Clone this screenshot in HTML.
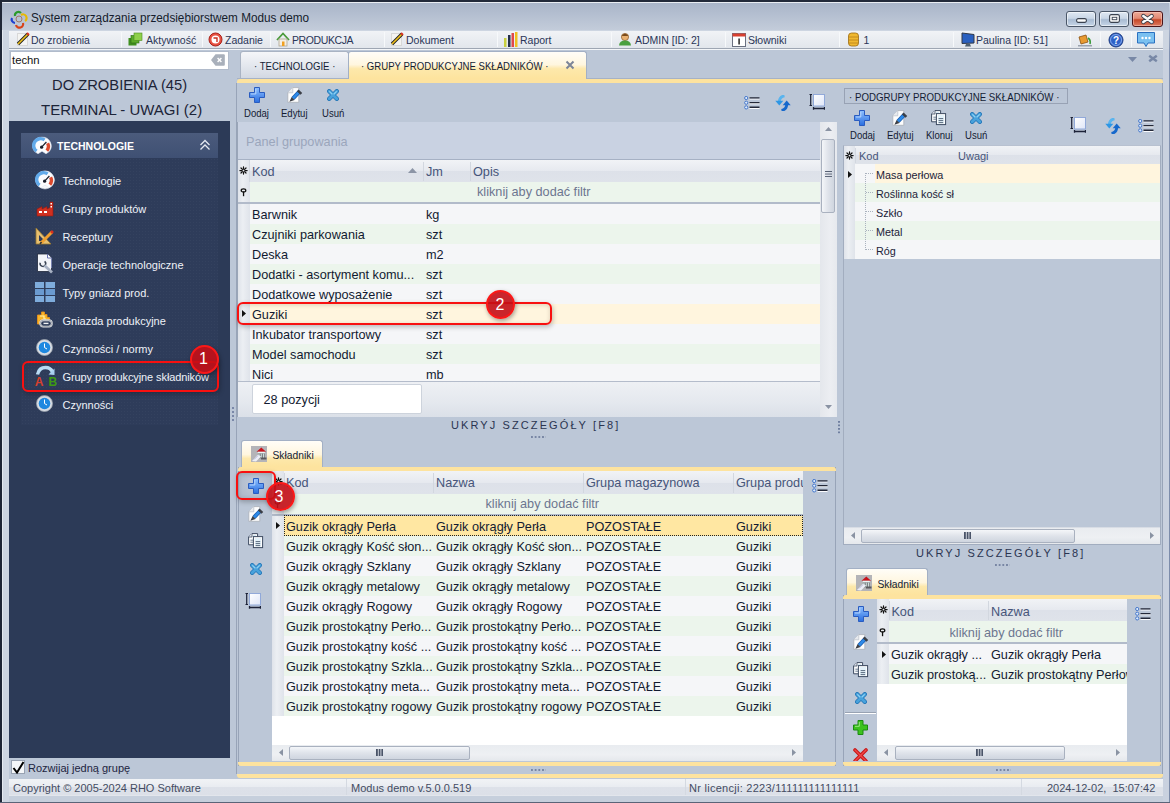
<!DOCTYPE html>
<html><head><meta charset="utf-8">
<style>
*{margin:0;padding:0;box-sizing:border-box}
html,body{width:1170px;height:803px;overflow:hidden}
body{position:relative;background:#bcc7d7;font-family:"Liberation Sans",sans-serif;color:#1c2640;font-size:12px}
.a{position:absolute}
.t{position:absolute;white-space:nowrap;line-height:1}
svg{position:absolute;overflow:visible}
.tb{font-size:10.5px;color:#2a3557}
.sep{position:absolute;top:32px;width:1px;height:15px;background:#d3d9e2;border-right:1px solid #f7f9fb}
.li{font-size:11px;color:#eef2f8}
.hdr{position:absolute;background:linear-gradient(#f1f3f6,#e6e9ef 50%,#dde1e9 51%,#dfe3ea)}
.g13{font-size:12.7px;color:#121a30;margin-top:0.7px}
.gh{font-size:12.7px;color:#46557a;margin-top:0.8px}
.ind{position:absolute;background:linear-gradient(90deg,#dfe3ea,#eceff3 40%,#dfe3ea)}
.rw{background:#f5f6f8}
.rg{background:#ecf5ec}
.sm{font-size:10.6px;color:#131b33;transform-origin:0 0;transform:scaleX(0.9)}
.sx{transform-origin:0 0}
</style></head><body>
<!-- WINDOW FRAME -->
<div class="a" style="left:0;top:0;width:1170px;height:803px;background:#cdd5e1"></div>
<div class="a" style="left:0;top:0;width:1170px;height:2px;background:#222a3a"></div>
<div class="a" style="left:0;top:0;width:2px;height:803px;background:#1f2636"></div>
<div class="a" style="left:2px;top:2px;width:1168px;height:1px;background:#e9edf3"></div>
<div class="a" style="left:2px;top:3px;width:1px;height:800px;background:#e4e9f0"></div>
<div class="a" style="left:2px;top:3px;width:1168px;height:27px;background:linear-gradient(#a9b5c9,#c3ccda)"></div>
<div class="a" style="left:0;top:802px;width:1170px;height:1px;background:#5a6478"></div>
<div class="a" style="left:9px;top:49px;width:1154px;height:747px;background:#bcc7d7"></div>

<!-- TITLE -->
<svg style="left:10px;top:10px" width="18" height="18" viewBox="0 0 18 18">
 <path d="M5 6 A3.5 3.5 0 0 1 11 3" stroke="#2a9a2a" stroke-width="2.2" fill="none"/>
 <path d="M11 5 A3.5 3.5 0 0 1 15 11" stroke="#e8b800" stroke-width="2.2" fill="none"/>
 <path d="M13 13 A3.5 3.5 0 0 1 6 15" stroke="#d8421a" stroke-width="2.2" fill="none"/>
 <path d="M5 13 A3.5 3.5 0 0 1 2 8" stroke="#1f3fd0" stroke-width="2.2" fill="none"/>
 <circle cx="9" cy="9" r="3" stroke="#a07868" stroke-width="1" fill="none"/>
</svg>
<div class="t sx" style="left:31px;top:12px;font-size:12.3px;color:#151c2c;transform:scaleX(0.955)">System zarządzania przedsiębiorstwem Modus demo</div>
<!-- window buttons -->
<div class="a" style="left:1066px;top:11px;width:30px;height:16px;border:1px solid #4a5668;border-radius:3px;background:linear-gradient(#dfe8f3,#c9d6e6 45%,#a9bbd2 55%,#c6d5e7);box-shadow:inset 0 0 0 1px rgba(255,255,255,.55)"></div>
<svg style="left:1076px;top:18px" width="11" height="5" viewBox="0 0 11 5"><rect x="0.6" y="0.6" width="9.8" height="3.8" rx="1.6" fill="#fafafa" stroke="#3a4250" stroke-width="1.1"/></svg>
<div class="a" style="left:1099px;top:11px;width:30px;height:16px;border:1px solid #4a5668;border-radius:3px;background:linear-gradient(#dfe8f3,#c9d6e6 45%,#a9bbd2 55%,#c6d5e7);box-shadow:inset 0 0 0 1px rgba(255,255,255,.55)"></div>
<svg style="left:1109px;top:14px" width="11" height="9" viewBox="0 0 11 9"><rect x="0.6" y="0.6" width="9.8" height="7.8" rx="1.6" fill="#fafafa" stroke="#3a4250" stroke-width="1.1"/><rect x="3.2" y="3.3" width="4.6" height="2.4" fill="#fff" stroke="#3a4250" stroke-width="0.9"/></svg>
<div class="a" style="left:1132px;top:11px;width:31px;height:16px;border:1px solid #4a1418;border-radius:3px;background:linear-gradient(#eeaa98,#e38a74 45%,#c64828 56%,#dd7a60);box-shadow:inset 0 0 0 1px rgba(255,220,210,.45)"></div>
<svg style="left:1141px;top:13.5px" width="13" height="10" viewBox="0 0 13 10"><path d="M2.3 2 L10.7 8 M10.7 2 L2.3 8" stroke="#3c3f48" stroke-width="4.2" stroke-linecap="round"/><path d="M2.3 2 L10.7 8 M10.7 2 L2.3 8" stroke="#fbfbfb" stroke-width="2.5" stroke-linecap="round"/></svg>

<!-- TOOLBAR -->
<div class="a" style="left:9px;top:31px;width:1154px;height:17px;background:linear-gradient(#f1f3f6,#e2e6ec);"></div>
<div class="a" style="left:9px;top:48px;width:1154px;height:1px;background:#9ea6b3"></div>
<div class="a" style="left:9px;top:49px;width:1154px;height:1px;background:#f4f6f9"></div>
<div class="sep" style="left:121px"></div><div class="sep" style="left:202px"></div><div class="sep" style="left:270px"></div>
<div class="sep" style="left:384px"></div><div class="sep" style="left:497px"></div><div class="sep" style="left:611px"></div>
<div class="sep" style="left:725px"></div><div class="sep" style="left:839px"></div><div class="sep" style="left:953px"></div>
<div class="sep" style="left:1070px"></div><div class="sep" style="left:1100px"></div><div class="sep" style="left:1131px"></div>
<!-- pencil icon -->
<div class="a" style="left:17px;top:33px;width:11px;height:13px;background:#f4f4f2;border:1px solid #d8d8d8"></div>
<svg style="left:16px;top:32px" width="14" height="14" viewBox="0 0 14 14"><path d="M2 12 L12 2" stroke="#222" stroke-width="3.4"/><path d="M2 12 L12 2" stroke="#f2c21a" stroke-width="1.6"/><path d="M11 1 L13 3" stroke="#d83020" stroke-width="2"/></svg>
<div class="t tb" style="left:31px;top:35px">Do zrobienia</div>
<svg style="left:128px;top:33px" width="14" height="13" viewBox="0 0 14 13"><rect x="0.5" y="5" width="8" height="7.5" fill="#3f8f1f"/><rect x="3" y="2.5" width="8" height="7.5" fill="#5bab2a" stroke="#2d6a14" stroke-width="0.6"/><rect x="6" y="0" width="8" height="7.5" fill="#8fd04a" stroke="#4a8a20" stroke-width="0.6"/></svg>
<div class="t tb" style="left:146px;top:35px">Aktywność</div>
<svg style="left:208px;top:32px" width="15" height="15" viewBox="0 0 15 15"><circle cx="7.5" cy="7.5" r="6.5" fill="#e85040" stroke="#a82018" stroke-width="1"/><circle cx="7.5" cy="7.5" r="4" fill="#fff"/><path d="M5.5 6 H9 V10" stroke="#c83020" stroke-width="1.4" fill="none"/></svg>
<div class="t tb" style="left:225px;top:35px">Zadanie</div>
<svg style="left:276px;top:32px" width="14" height="15" viewBox="0 0 14 15"><path d="M1 8 L7 1.5 L13 8" stroke="#4a9a3a" stroke-width="1.8" fill="none"/><rect x="3" y="7" width="8" height="7" fill="#f4efe4" stroke="#b0a690" stroke-width="0.8"/><rect x="6" y="9.5" width="2.5" height="4.5" fill="#f0a020"/></svg>
<div class="t tb" style="left:292px;top:35px;letter-spacing:-0.4px">PRODUKCJA</div>
<div class="a" style="left:391px;top:33px;width:11px;height:13px;background:#f4f4f2;border:1px solid #d8d8d8"></div>
<svg style="left:390px;top:32px" width="14" height="14" viewBox="0 0 14 14"><path d="M2 12 L12 2" stroke="#222" stroke-width="3.4"/><path d="M2 12 L12 2" stroke="#f2c21a" stroke-width="1.6"/><path d="M11 1 L13 3" stroke="#d83020" stroke-width="2"/></svg>
<div class="t tb" style="left:406px;top:35px">Dokument</div>
<svg style="left:503px;top:32px" width="15" height="15" viewBox="0 0 15 15"><rect x="1" y="6" width="2.5" height="9" fill="#c8d040"/><rect x="5" y="3" width="2.5" height="12" fill="#24304a"/><rect x="8.5" y="1" width="2.5" height="14" fill="#e04848"/><rect x="12" y="0" width="2.5" height="15" fill="#f0c020"/></svg>
<div class="t tb" style="left:520px;top:35px">Raport</div>
<svg style="left:618px;top:32px" width="14" height="15" viewBox="0 0 14 15"><circle cx="7" cy="5" r="3.6" fill="#e8b070" stroke="#8a5a2a" stroke-width="0.7"/><path d="M3.5 4 Q7 -0.5 10.5 4" fill="#7a4a1a"/><path d="M1 13.5 Q1.5 8.5 7 8.5 Q12.5 8.5 13 13.5 Z" fill="#4aa040"/></svg>
<div class="t tb" style="left:635px;top:35px">ADMIN [ID: 2]</div>
<svg style="left:732px;top:32px" width="14" height="15" viewBox="0 0 14 15"><rect x="0.5" y="1.5" width="13" height="13" fill="#fff" stroke="#6a7080" stroke-width="1"/><rect x="0.5" y="1.5" width="13" height="3" fill="#d84030"/><rect x="6.3" y="6.5" width="1.6" height="6" fill="#333"/></svg>
<div class="t tb" style="left:748px;top:35px">Słowniki</div>
<svg style="left:848px;top:32px" width="11" height="15" viewBox="0 0 11 15"><rect x="0.5" y="1" width="10" height="13" rx="3" fill="#f0b830" stroke="#9a6a10" stroke-width="0.8"/><path d="M1 5 H10 M1 8 H10 M1 11 H10" stroke="#b8801a" stroke-width="0.8"/></svg>
<div class="t tb" style="left:863.5px;top:35px">1</div>
<svg style="left:961px;top:32px" width="14" height="15" viewBox="0 0 14 15"><path d="M1 1 L13 2.5 L13 11 L1 11.5 Z" fill="#2a60c0" stroke="#303848" stroke-width="1"/><path d="M5 12 L9 12 L10 14.5 L4 14.5 Z" fill="#506070"/></svg>
<div class="t tb" style="left:976px;top:35px">Paulina [ID: 51]</div>
<svg style="left:1077px;top:32px" width="16" height="15" viewBox="0 0 16 15"><path d="M2 5 L9 3 L11 10 L4 12 Z" fill="#e89a30" stroke="#8a5010" stroke-width="0.8"/><path d="M11 6 Q14 8 13 12" stroke="#3a9a3a" stroke-width="1.6" fill="none"/><rect x="1" y="13" width="14" height="1.5" fill="#9aa2ae"/></svg>
<svg style="left:1108px;top:32px" width="16" height="16" viewBox="0 0 16 16"><circle cx="8" cy="8" r="7" fill="#2e62c8" stroke="#1c3a80" stroke-width="1"/><circle cx="8" cy="8" r="5.5" fill="none" stroke="#9ab8f0" stroke-width="0.8"/><text x="8" y="12" font-size="10" font-weight="bold" fill="#fff" text-anchor="middle" font-family="Liberation Sans">?</text></svg>
<svg style="left:1137px;top:32px" width="18" height="16" viewBox="0 0 18 16"><path d="M0.5 0.5 H17.5 V11 H11 L9 14.5 L7 11 H0.5 Z" fill="#7ac0f0" stroke="#2a70c0" stroke-width="1"/><circle cx="5.5" cy="6" r="1.2" fill="#fff"/><circle cx="9" cy="6" r="1.2" fill="#fff"/><circle cx="12.5" cy="6" r="1.2" fill="#fff"/></svg>

<!-- LEFT PANEL -->
<div class="a" style="left:10px;top:51px;width:219px;height:19px;background:#fff;border:1px solid #b1bbcb"></div>
<div class="t" style="left:12px;top:55.3px;font-size:11.3px;color:#111">techn</div>
<svg style="left:211px;top:54px" width="14" height="12" viewBox="0 0 14 12"><path d="M0 6 L4.5 0.3 H12.8 Q13.8 0.3 13.8 1.3 V10.7 Q13.8 11.7 12.8 11.7 H4.5 Z" fill="#a9b0bb"/><path d="M6.6 4 L10.4 8 M10.4 4 L6.6 8" stroke="#fff" stroke-width="1.4"/></svg>
<div class="t sx" style="left:52px;top:77px;font-size:15.4px;color:#1c2438;transform:scaleX(0.958)">DO ZROBIENIA (45)</div>
<div class="t sx" style="left:41px;top:101.5px;font-size:15.4px;color:#1c2438;transform:scaleX(0.973)">TERMINAL - UWAGI (2)</div>
<div class="a" style="left:9px;top:121px;width:221px;height:637px;background:#2c3a57"></div>
<div class="a" style="left:21px;top:158px;width:197px;height:267px;background-color:#2e3c5a;background-image:radial-gradient(#34425f 0.6px,transparent 0.8px);background-size:3px 3px"></div>
<div class="a" style="left:21px;top:133px;width:197px;height:25px;background:linear-gradient(#4b5b7c,#3f5073)"></div>
<svg style="left:32px;top:136px" width="20" height="20"><use href="#igauge"/></svg>
<div class="t" style="left:57px;top:141px;font-size:10.5px;font-weight:bold;color:#fff">TECHNOLOGIE</div>
<svg style="left:199px;top:139px" width="12" height="12" viewBox="0 0 12 12"><path d="M1.5 6 L6 1.5 L10.5 6 M1.5 10.5 L6 6 L10.5 10.5" stroke="#e4e8f0" stroke-width="1.3" fill="none"/></svg>
<!-- left items -->
<svg style="left:35px;top:170px" width="20" height="20" viewBox="0 0 20 20"><circle cx="10" cy="10" r="9" fill="#f6f8fb" stroke="#c8d0dc" stroke-width="0.6"/><use href="#igauge" width="20" height="20"/></svg>
<div class="t li" style="left:62.5px;top:176.2px">Technologie</div>
<svg style="left:36px;top:201px" width="18" height="16" viewBox="0 0 18 16"><path d="M1 8 L6 5.5 V8 L11 5.5 V8 L14 6.5 V1 H17 V15 H1 Z" fill="#d03020" stroke="#901a10" stroke-width="0.6"/><rect x="3" y="10" width="3" height="2" fill="#fff"/><rect x="8" y="10" width="3" height="2" fill="#fff"/><rect x="14.5" y="2" width="1.5" height="1.5" fill="#fff"/><rect x="14.5" y="5" width="1.5" height="1.5" fill="#fff"/></svg>
<div class="t li" style="left:62.5px;top:204.2px">Grupy produktów</div>
<svg style="left:35px;top:227px" width="19" height="19" viewBox="0 0 19 19"><path d="M1 1 L1 17 L16 17 Z" fill="#e8c070" stroke="#9a7a30" stroke-width="0.8"/><path d="M4 8 L4 14 L10 14 Z" fill="#2e3c5a"/><path d="M6 16 L17 5" stroke="#f0a030" stroke-width="3"/><path d="M16 4 L18 6" stroke="#d83020" stroke-width="2.5"/><path d="M5 17 L6.5 15" stroke="#333" stroke-width="1.5"/></svg>
<div class="t li" style="left:62.5px;top:232.2px">Receptury</div>
<svg style="left:36px;top:253px" width="18" height="20" viewBox="0 0 18 20"><path d="M1.5 1 H11.5 L15.5 5 V18.5 H1.5 Z" fill="#f2f4f9" stroke="#1e2638" stroke-width="0.8"/><path d="M11.5 1 V5 H15.5" fill="#fff" stroke="#5a64a8" stroke-width="0.9"/><path d="M15.5 5 V15" stroke="#8a94c8" stroke-width="0.8"/><path d="M4.2 9.8 A2.8 2.8 0 1 0 8.6 8.4" stroke="#3a4454" stroke-width="1.5" fill="none"/><path d="M8.5 12.5 L16 19.5" stroke="#a8b2c4" stroke-width="2.8"/></svg>
<div class="t li" style="left:62.5px;top:260.2px">Operacje technologiczne</div>
<svg style="left:35px;top:282px" width="20" height="20" viewBox="0 0 20 20"><rect x="0" y="0" width="9" height="6" fill="#7eacdc"/><rect x="10.5" y="0" width="9.5" height="6" fill="#7eacdc"/><rect x="0" y="7" width="9" height="6" fill="#6a9ad0"/><rect x="10.5" y="7" width="9.5" height="6" fill="#6a9ad0"/><rect x="0" y="14" width="9" height="6" fill="#7eacdc"/><rect x="10.5" y="14" width="9.5" height="6" fill="#7eacdc"/></svg>
<div class="t li" style="left:62.5px;top:288.2px">Typy gniazd prod.</div>
<svg style="left:36px;top:311px" width="18" height="17" viewBox="0 0 18 17"><path d="M5.5 1 H8.5 V3.5 H11 V6.5 H13.5 V9 H4 V13 H1.5 V4 H5.5 Z" fill="#f8b628" stroke="#e8901c" stroke-width="0.9"/><path d="M4 5 H8 V8 H10" stroke="#fff2b0" stroke-width="1.2" fill="none"/><rect x="4.2" y="9.2" width="11.6" height="6.4" rx="3" fill="none" stroke="#e4e6ea" stroke-width="1.9"/><rect x="4.2" y="9.2" width="11.6" height="6.4" rx="3" fill="none" stroke="#6a707a" stroke-width="0.5"/><path d="M7.5 12.4 H12.5" stroke="#f0f2f4" stroke-width="1.4"/></svg>
<div class="t li" style="left:62.5px;top:316.2px">Gniazda produkcyjne</div>
<svg style="left:36px;top:339px" width="17" height="17" viewBox="0 0 17 17"><circle cx="8.5" cy="8.5" r="8" fill="#d8dde4" stroke="#9aa2ac" stroke-width="0.8"/><circle cx="8.5" cy="8.5" r="5.8" fill="#1e88e0"/><path d="M8.5 4.5 V8.5 L11 10" stroke="#fff" stroke-width="1" fill="none"/></svg>
<div class="t li" style="left:62.5px;top:344.2px">Czynności / normy</div>
<svg style="left:33px;top:364px" width="24" height="24" viewBox="0 0 24 24"><path d="M4.5 10.5 Q6 3.5 12.5 3.5 Q17.5 3.5 19.5 8" stroke="#b8dcf4" stroke-width="3.4" fill="none"/><path d="M15.5 10.5 L21.5 11 L21.5 4.5 Z" fill="#a8d0f0"/><text x="1.8" y="22" font-size="12" font-weight="bold" fill="#d8402c" font-family="Liberation Sans">A</text><text x="15.5" y="22" font-size="12" font-weight="bold" fill="#3e9a12" font-family="Liberation Sans">B</text></svg>
<div class="t li" style="left:62.5px;top:372.2px;letter-spacing:-0.1px">Grupy produkcyjne składników</div>
<svg style="left:36px;top:395px" width="17" height="17" viewBox="0 0 17 17"><circle cx="8.5" cy="8.5" r="8" fill="#d8dde4" stroke="#9aa2ac" stroke-width="0.8"/><circle cx="8.5" cy="8.5" r="5.8" fill="#1e88e0"/><path d="M8.5 4.5 V8.5 L11 10" stroke="#fff" stroke-width="1" fill="none"/></svg>
<div class="t li" style="left:62.5px;top:400.2px">Czynności</div>
<!-- annotation 1 -->
<div class="a" style="left:22px;top:361px;width:197px;height:31px;border:2.5px solid #f81010;border-radius:6px;box-shadow:1px 2px 5px rgba(0,0,0,.25),inset 0 1px 4px rgba(60,40,0,.18)"></div>
<div class="a" style="left:189.8px;top:344.7px;width:29px;height:29px;border-radius:50%;background:rgba(196,14,22,0.9);border:2px solid #fa1818;box-shadow:1px 2px 4px rgba(0,0,0,.35)"></div>
<div class="t" style="left:199px;top:351.3px;font-size:16px;color:#fff">1</div>
<!-- left splitter dots -->
<div class="a" style="left:232px;top:407px;width:2px;height:16px;background-image:linear-gradient(#7a88a8 50%,transparent 50%);background-size:2px 4px"></div>

<!-- checkbox -->
<div class="a" style="left:11px;top:760px;width:14px;height:14px;background:#f4f6f9;border:1px solid #98a2b2"></div>
<svg style="left:12px;top:761px" width="13" height="13" viewBox="0 0 13 13"><path d="M1.5 7 L5 11.5 L11.5 1" stroke="#000" stroke-width="2" fill="none"/></svg>
<div class="t" style="left:28px;top:763px;font-size:11px;color:#1c2440">Rozwijaj jedną grupę</div>

<!-- STATUS BAR -->
<div class="a" style="left:9px;top:779px;width:1154px;height:17px;background:linear-gradient(#f1f3f6,#e9ecf1 45%,#dde1e9 50%,#dce0e8 92%,#e6e9ee)"></div>
<div class="a" style="left:9px;top:796px;width:1154px;height:6px;background:#c6cfdc"></div>
<div class="t" style="left:13px;top:783px;font-size:11px;color:#444c62">Copyright © 2005-2024 RHO Software</div>
<div class="a" style="left:346px;top:779px;width:1px;height:16px;background:#d4d9e1"></div>
<div class="t" style="left:351px;top:783px;font-size:11px;color:#444c62">Modus demo v.5.0.0.519</div>
<div class="a" style="left:685px;top:779px;width:1px;height:16px;background:#d4d9e1"></div>
<div class="t" style="left:689px;top:783px;font-size:11px;letter-spacing:0.27px;color:#444c62">Nr licencji: 2223/111111111111111</div>
<div class="a" style="left:1021px;top:779px;width:1px;height:16px;background:#d4d9e1"></div>
<div class="t" style="left:1047px;top:783px;font-size:11px;color:#444c62">2024-12-02,&nbsp; 15:07:42</div>
<!-- ICON DEFS -->
<svg width="0" height="0" style="position:absolute">
 <defs>
  <linearGradient id="gp" x1="0" y1="0" x2="0" y2="1"><stop offset="0" stop-color="#8ec0ff"/><stop offset="1" stop-color="#2a6ee0"/></linearGradient>
  <linearGradient id="gx" x1="0" y1="0" x2="0" y2="1"><stop offset="0" stop-color="#7ac8ee"/><stop offset="1" stop-color="#2a88c8"/></linearGradient>
  <symbol id="iplus" viewBox="0 0 16 16"><path d="M5.5 0.5 H10.5 V5.5 H15.5 V10.5 H10.5 V15.5 H5.5 V10.5 H0.5 V5.5 H5.5 Z" fill="url(#gp)" stroke="#2a5cc0" stroke-width="1" stroke-linejoin="round"/><path d="M6.8 2 V7 H2" stroke="#c8e0ff" stroke-width="0.8" fill="none"/></symbol>
  <symbol id="iedit" viewBox="0 0 16 16"><path d="M0.8 5.8 L5.8 0.6 H11.8 V15.3 H0.8 Z" fill="#fdfdfd" stroke="#a8aeb8" stroke-width="0.8"/><path d="M0.8 5.8 H5.8 V0.6" fill="#e8ebef" stroke="#b8bec8" stroke-width="0.7"/><path d="M6 11.4 L12.4 4.6" stroke="#1a5cb0" stroke-width="4"/><path d="M6 11.4 L12.4 4.6" stroke="#2d8ae8" stroke-width="2.5"/><path d="M11.6 2.6 L15.2 6 L13.5 7.8 L9.9 4.4 Z" fill="#3a3e46"/><path d="M4.6 10 L7.6 12.9 L2.4 14.8 Z" fill="#3c3f46"/></symbol>
  <symbol id="ix" viewBox="0 0 12 12"><path d="M2.2 2.2 L9.8 9.8 M9.8 2.2 L2.2 9.8" stroke="#2678b8" stroke-width="4.4" stroke-linecap="round"/><path d="M2.2 2.2 L9.8 9.8 M9.8 2.2 L2.2 9.8" stroke="#48a2dc" stroke-width="2.8" stroke-linecap="round"/><path d="M2.6 2.6 L5 5 M9.4 2.6 L7 5" stroke="#8ed0f2" stroke-width="1.1" stroke-linecap="round"/></symbol>
  <symbol id="iclone" viewBox="0 0 16 16"><path d="M0.6 4 L4 0.6 H9.6 V11.8 H0.6 Z" fill="#fbfcfd" stroke="#3e4c62" stroke-width="1"/><path d="M0.6 4 H4 V0.6" fill="#e4e8ee" stroke="#3e4c62" stroke-width="0.8"/><rect x="5" y="2" width="3" height="3" fill="#d6ecf8"/><path d="M2.4 7.2 H5 M2.4 9.2 H5" stroke="#5c7088" stroke-width="0.9"/><rect x="5.4" y="3.6" width="9.2" height="11" fill="#fbfcfd" stroke="#3e4c62" stroke-width="1"/><rect x="7" y="5" width="6" height="8.5" fill="#e4f2fa"/><path d="M7.6 8.6 H12.2 M7.6 10.6 H12.2 M7.6 12.6 H12.2" stroke="#4a5a70" stroke-width="0.9"/></symbol>
  <symbol id="ilist" viewBox="0 0 16 14"><g fill="#dcebfb" stroke="#3a6ec8" stroke-width="0.9"><circle cx="2.2" cy="2" r="1.6"/><circle cx="2.2" cy="6.7" r="1.6"/><circle cx="2.2" cy="11.4" r="1.6"/></g><path d="M5.5 3 H15.5 M5.5 7.7 H15.5 M5.5 12.4 H15.5" stroke="#fbfcfe" stroke-width="1.2"/><path d="M5.5 1.9 H15.5 M5.5 6.6 H15.5 M5.5 11.3 H15.5" stroke="#232838" stroke-width="1.4"/></symbol>
  <symbol id="iref" viewBox="0 0 16 16"><path d="M9.5 0.8 Q4.6 1.6 4.3 6.5" stroke="#5ab4ee" stroke-width="2.8" fill="none"/><path d="M0.3 5.8 L8.3 5.8 L4.3 10.6 Z" fill="#2e96e4"/><path d="M6.5 15.4 Q11.4 14.6 11.7 9.6" stroke="#1668cc" stroke-width="2.8" fill="none"/><path d="M7.7 10.3 L15.7 10.3 L11.7 5.5 Z" fill="#1668cc"/></symbol>
  <symbol id="iframe" viewBox="0 0 16 16"><path d="M0.5 0.5 H3 M1.7 0.5 V11.5 M0.5 11.5 H3" stroke="#1c2238" stroke-width="1.2" fill="none"/><rect x="4.5" y="0.5" width="11" height="11.5" fill="url(#gfr)" stroke="#8aa4d8" stroke-width="0.9"/><path d="M4.5 14.5 H15.5 M4.5 13 V15.8 M15.5 13 V15.8" stroke="#1c2238" stroke-width="1.3" fill="none"/></symbol>
  <linearGradient id="gfr" x1="0" y1="0" x2="1" y2="1"><stop offset="0" stop-color="#ffffff"/><stop offset="1" stop-color="#dfe6f8"/></linearGradient>
  <symbol id="iskl" viewBox="0 0 16 16"><rect x="0" y="0" width="16" height="16" fill="#b4b4b8"/><path d="M5.5 5.8 L10.3 1.6 L15 5.8 Z" fill="#c8141c"/><rect x="6.8" y="5.8" width="7" height="1.6" fill="#e8f4f4"/><rect x="6.8" y="7.4" width="7" height="5" fill="#7a8284"/><path d="M8 7.6 V12 M10.3 7.6 V12 M12.5 7.6 V12" stroke="#d8e4e4" stroke-width="0.9"/><rect x="10" y="11.5" width="5.5" height="2" fill="#5a5a5e"/><path d="M1 15 L7 8.6 L10 10.6 L5 15.6 Z" fill="#eceef6"/><path d="M3 13.5 L7 9.5" stroke="#a8a8d0" stroke-width="0.8"/></symbol>
 <symbol id="igauge" viewBox="0 0 20 20"><path d="M10 1.2 A8.8 8.8 0 0 1 17.2 15.6 L14 17.8 L10 15.2 L6 17.8 L2.8 15.6 A8.8 8.8 0 0 1 10 1.2 Z" fill="#fbfcfe" stroke="#dfe6f0" stroke-width="0.6"/><path d="M4.6 15.2 A6.6 6.6 0 0 1 12.6 3.9" stroke="#62aaea" stroke-width="3.4" fill="none"/><path d="M15.6 7.2 A6.6 6.6 0 0 1 14.8 14.6" stroke="#dc4a2e" stroke-width="3.4" fill="none"/><path d="M9.6 11.2 L14.4 6" stroke="#1a1e2a" stroke-width="1.2"/><circle cx="9.6" cy="11.2" r="1.6" fill="#1a1e2a"/></symbol>
 </defs>
</svg>

<!-- MAIN TABS -->
<div class="a" style="left:240px;top:51px;width:109px;height:28px;border:1px solid #a9b3c3;border-bottom:none;border-radius:3px 3px 0 0;background:linear-gradient(#f5f6f9,#e2e6ed 55%,#d1d7e1)"></div>
<div class="t sx" style="left:253.5px;top:60.6px;font-size:10.6px;color:#141c34;transform:scaleX(0.905)">· TECHNOLOGIE ·</div>
<div class="a" style="left:348px;top:51px;width:239px;height:29px;border:1px solid #a3b0c5;border-bottom:none;border-radius:3px 3px 0 0;background:linear-gradient(#fffdf8,#fff6df 45%,#fde8ab 60%,#fde39c)"></div>
<div class="t sx" style="left:360.5px;top:60.6px;font-size:10.6px;color:#141c34;transform:scaleX(0.905)">· GRUPY PRODUKCYJNE SKŁADNIKÓW ·</div>
<svg style="left:565px;top:60px" width="10" height="10" viewBox="0 0 10 10"><path d="M1.5 1.5 L8.5 8.5 M8.5 1.5 L1.5 8.5" stroke="#7c8598" stroke-width="2"/></svg>
<svg style="left:1128px;top:57px" width="9" height="5" viewBox="0 0 9 5"><path d="M0 0 H9 L4.5 5 Z" fill="#7888a6"/></svg>
<svg style="left:1148px;top:55px" width="10" height="7" viewBox="0 0 10 7"><path d="M1.2 0.8 L8.8 6.2 M8.8 0.8 L1.2 6.2" stroke="#7888a6" stroke-width="2.5"/></svg>

<!-- MAIN TAB PAGE -->
<div class="a" style="left:237px;top:78px;width:111px;height:1px;background:#a6b2c6"></div><div class="a" style="left:587px;top:78px;width:576px;height:1px;background:#a6b2c6"></div>
<div class="a" style="left:237px;top:79px;width:926px;height:699px;background:#bcc7d7"></div>
<div class="a" style="left:237px;top:79px;width:926px;height:4px;background:#fde39f;border-radius:3px 3px 0 0"></div>
<div class="a" style="left:237px;top:774px;width:926px;height:4px;background:#fde39f;border-radius:0 0 3px 3px"></div>
<div class="a" style="left:236px;top:83px;width:1px;height:691px;background:#98a4b8"></div>
<div class="a" style="left:1162px;top:83px;width:1px;height:691px;background:#98a4b8"></div>
<div class="a" style="left:1163px;top:49px;width:7px;height:753px;background:#c9d1df"></div><div class="a" style="left:1169px;top:3px;width:1px;height:799px;background:linear-gradient(#c8d2e0,#8090b0 50px,#7a8aa8)"></div>
<div class="a" style="left:838px;top:421px;width:2px;height:14px;background-image:linear-gradient(#6f7fa0 50%,transparent 50%);background-size:2px 3.5px"></div>

<!-- MAIN TOOLBAR -->
<svg style="left:249px;top:87px" width="16" height="16"><use href="#iplus"/></svg>
<div class="t sm" style="left:244px;top:107.5px">Dodaj</div>
<svg style="left:287px;top:87px" width="16" height="16"><use href="#iedit"/></svg>
<div class="t sm" style="left:281px;top:107.5px">Edytuj</div>
<svg style="left:327px;top:89px" width="12" height="12"><use href="#ix"/></svg>
<div class="t sm" style="left:322px;top:107.5px">Usuń</div>
<svg style="left:744px;top:96px" width="16" height="14"><use href="#ilist"/></svg>
<svg style="left:775px;top:95px" width="16" height="16"><use href="#iref"/></svg>
<svg style="left:809px;top:94px" width="16" height="16"><use href="#iframe"/></svg>
<!-- TOP GRID -->
<div class="a" style="left:237px;top:122px;width:600px;height:295px;background:#c9d2e2;border-left:1px solid #9aa6b8"></div>
<div class="t" style="left:246px;top:135.5px;font-size:12.7px;color:#9ba6bc">Panel grupowania</div>
<div class="a" style="left:238px;top:159px;width:582px;height:1px;background:#a6b1c4"></div>
<div class="hdr" style="left:238px;top:160px;width:582px;height:22px"></div>
<div class="ind" style="left:238px;top:160px;width:12px;height:22px"></div>
<div class="a" style="left:423px;top:162px;width:1px;height:19px;background:#f6f7f9;border-left:1px solid #d2d7df"></div>
<div class="a" style="left:470px;top:162px;width:1px;height:19px;background:#f6f7f9;border-left:1px solid #d2d7df"></div>
<div class="a" style="left:249px;top:160px;width:1px;height:22px;background:#d2d7df"></div>
<svg style="left:239px;top:166px" width="10" height="10" viewBox="0 0 10 10"><path d="M4.5 0.9 V3.2 M4.5 5.8 V8.1 M0.9 4.5 H3.2 M5.8 4.5 H8.1 M2 2 L3.4 3.4 M5.6 5.6 L7 7 M7 2 L5.6 3.4 M3.4 5.6 L2 7" stroke="#111" stroke-width="1.25" stroke-linecap="round"/></svg>
<div class="t gh" style="left:252px;top:165.3px">Kod</div>
<svg style="left:408px;top:168px" width="9" height="5" viewBox="0 0 9 5"><path d="M0 5 L4.5 0 L9 5 Z" fill="#8c95a6"/></svg>
<div class="t gh" style="left:426px;top:165.3px">Jm</div>
<div class="t gh" style="left:473px;top:165.3px">Opis</div>
<div class="a" style="left:250px;top:182px;width:570px;height:20px;background:#ecf5ec"></div>
<div class="ind" style="left:238px;top:182px;width:12px;height:20px"></div>
<svg style="left:240px;top:187px" width="8" height="10" viewBox="0 0 8 10"><ellipse cx="3.5" cy="3.4" rx="2.3" ry="1.5" fill="#e8eaee" stroke="#111" stroke-width="1.3"/><rect x="2.9" y="4.6" width="1.3" height="4.6" fill="#111"/></svg>
<div class="t gh" style="left:477px;top:185.7px;color:#6c7690">kliknij aby dodać filtr</div>
<div class="a" style="left:238px;top:202px;width:582px;height:2px;background:#b2bbca"></div>
<div class="a" style="left:250px;top:204px;width:570px;height:20px;background:#f5f6f8"></div>
<div class="ind" style="left:238px;top:204px;width:12px;height:20px"></div>
<div class="t g13" style="left:252px;top:208px">Barwnik</div>
<div class="t g13" style="left:426px;top:208px">kg</div>
<div class="a" style="left:250px;top:224px;width:570px;height:20px;background:#ecf5ec"></div>
<div class="ind" style="left:238px;top:224px;width:12px;height:20px"></div>
<div class="t g13" style="left:252px;top:228px">Czujniki parkowania</div>
<div class="t g13" style="left:426px;top:228px">szt</div>
<div class="a" style="left:250px;top:244px;width:570px;height:20px;background:#f5f6f8"></div>
<div class="ind" style="left:238px;top:244px;width:12px;height:20px"></div>
<div class="t g13" style="left:252px;top:248px">Deska</div>
<div class="t g13" style="left:426px;top:248px">m2</div>
<div class="a" style="left:250px;top:264px;width:570px;height:20px;background:#ecf5ec"></div>
<div class="ind" style="left:238px;top:264px;width:12px;height:20px"></div>
<div class="t g13" style="left:252px;top:268px">Dodatki - asortyment komu...</div>
<div class="t g13" style="left:426px;top:268px">szt</div>
<div class="a" style="left:250px;top:284px;width:570px;height:20px;background:#f5f6f8"></div>
<div class="ind" style="left:238px;top:284px;width:12px;height:20px"></div>
<div class="t g13" style="left:252px;top:288px">Dodatkowe wyposażenie</div>
<div class="t g13" style="left:426px;top:288px">szt</div>
<div class="a" style="left:250px;top:304px;width:570px;height:20px;background:#fff5de"></div>
<div class="ind" style="left:238px;top:304px;width:12px;height:20px"></div>
<div class="t g13" style="left:252px;top:308px">Guziki</div>
<div class="t g13" style="left:426px;top:308px">szt</div>
<div class="a" style="left:250px;top:324px;width:570px;height:20px;background:#f5f6f8"></div>
<div class="ind" style="left:238px;top:324px;width:12px;height:20px"></div>
<div class="t g13" style="left:252px;top:328px">Inkubator transportowy</div>
<div class="t g13" style="left:426px;top:328px">szt</div>
<div class="a" style="left:250px;top:344px;width:570px;height:20px;background:#ecf5ec"></div>
<div class="ind" style="left:238px;top:344px;width:12px;height:20px"></div>
<div class="t g13" style="left:252px;top:348px">Model samochodu</div>
<div class="t g13" style="left:426px;top:348px">szt</div>
<div class="a" style="left:250px;top:364px;width:570px;height:17px;background:#f5f6f8"></div>
<div class="ind" style="left:238px;top:364px;width:12px;height:17px"></div>
<div class="t g13" style="left:252px;top:368px">Nici</div>
<div class="t g13" style="left:426px;top:368px">mb</div>
<svg style="left:242px;top:310px" width="4" height="7" viewBox="0 0 4 7"><path d="M0 0 L4 3.5 L0 7 Z" fill="#111"/></svg>
<div class="a" style="left:238px;top:381px;width:582px;height:1px;background:#b4bccb"></div>
<div class="a" style="left:238px;top:382px;width:582px;height:35px;background:linear-gradient(#eef0f4,#e4e8ee 60%,#dbe0e8)"></div>
<div class="a" style="left:252px;top:384px;width:170px;height:30px;background:#fff;border:1px solid #cdd3dc;border-radius:2px"></div>
<div class="t g13" style="left:263.5px;top:393.2px">28 pozycji</div>
<div class="a" style="left:820px;top:122px;width:17px;height:295px;background:linear-gradient(90deg,#e4e7ec,#eceef2 60%,#e6e9ee)"></div>
<svg style="left:825px;top:127px" width="7" height="4" viewBox="0 0 7 4"><path d="M0 4 L3.5 0 L7 4 Z" fill="#8a93a3"/></svg>
<svg style="left:825px;top:405px" width="7" height="4" viewBox="0 0 7 4"><path d="M0 0 L3.5 4 L7 0 Z" fill="#8a93a3"/></svg>
<div class="a" style="left:821px;top:139px;width:14px;height:74px;border:1px solid #a9b1bf;border-radius:2px;background:linear-gradient(90deg,#f4f6f9,#dfe3ea 50%,#cfd5df)"></div>
<div class="a" style="left:825px;top:171px;width:7px;height:7px;background-image:linear-gradient(#4a5468 1.2px,transparent 1.2px);background-size:7px 2.6px"></div>
<div class="t" style="left:451px;top:419.5px;font-size:11px;letter-spacing:2.1px;color:#2a3450">UKRYJ SZCZEGÓŁY [F8]</div>
<div class="a" style="left:531px;top:435.5px;width:15px;height:2px;background-image:linear-gradient(90deg,#7886a4 2px,transparent 2px);background-size:3.7px 2px"></div>
<!-- SKLADNIKI (LEFT) -->
<div class="a" style="left:241px;top:440px;width:82px;height:28px;border:1px solid #a3b0c5;border-bottom:none;border-radius:3px 3px 0 0;background:linear-gradient(#fffdf8,#fff6df 50%,#fde8ab 65%,#fde39c)"></div>
<svg style="left:251px;top:446px" width="16" height="16"><use href="#iskl"/></svg>
<div class="t" style="left:272.5px;top:451px;font-size:10.3px;color:#141c34">Składniki</div>
<div class="a" style="left:238px;top:467px;width:598px;height:299px;background:#bcc7d7;border-left:1px solid #98a4b8;border-right:1px solid #98a4b8"></div>
<div class="a" style="left:238px;top:467px;width:598px;height:4px;background:#fde39f;border-radius:3px 3px 0 0"></div>
<div class="a" style="left:238px;top:762px;width:598px;height:4px;background:#fde39f;border-radius:0 0 3px 3px"></div>
<div class="a" style="left:239px;top:472px;width:33px;height:27px;border-radius:3px;background:radial-gradient(ellipse at 50% 45%,#c2cbd9,#aab6c8)"></div>
<svg style="left:248px;top:478px" width="16" height="16"><use href="#iplus"/></svg>
<svg style="left:248px;top:506px" width="16" height="16"><use href="#iedit"/></svg>
<svg style="left:248px;top:533px" width="16" height="16"><use href="#iclone"/></svg>
<svg style="left:250px;top:563px" width="12" height="12"><use href="#ix"/></svg>
<svg style="left:245px;top:593px" width="16" height="16"><use href="#iframe"/></svg>
<div class="hdr" style="left:272px;top:471px;width:531px;height:23px"></div>
<div class="ind" style="left:272px;top:471px;width:12px;height:23px"></div>
<div class="a" style="left:284px;top:473px;width:1px;height:20px;background:#f6f7f9;border-left:1px solid #d2d7df"></div>
<div class="a" style="left:433px;top:473px;width:1px;height:20px;background:#f6f7f9;border-left:1px solid #d2d7df"></div>
<div class="a" style="left:583px;top:473px;width:1px;height:20px;background:#f6f7f9;border-left:1px solid #d2d7df"></div>
<div class="a" style="left:733px;top:473px;width:1px;height:20px;background:#f6f7f9;border-left:1px solid #d2d7df"></div>
<svg style="left:274px;top:477px" width="10" height="10" viewBox="0 0 10 10"><path d="M4.5 0.9 V3.2 M4.5 5.8 V8.1 M0.9 4.5 H3.2 M5.8 4.5 H8.1 M2 2 L3.4 3.4 M5.6 5.6 L7 7 M7 2 L5.6 3.4 M3.4 5.6 L2 7" stroke="#111" stroke-width="1.25" stroke-linecap="round"/></svg>
<div class="t gh" style="left:286px;top:476.6px">Kod</div>
<div class="t gh" style="left:436px;top:476.6px">Nazwa</div>
<div class="t gh" style="left:586px;top:476.6px">Grupa magazynowa</div>
<div style="position:absolute;left:736px;top:471px;width:67px;height:23px;overflow:hidden"><div class="t gh" style="left:0;top:5.6px">Grupa produkcyjna</div></div>
<div class="a" style="left:284px;top:494px;width:519px;height:20px;background:#ecf5ec"></div>
<div class="ind" style="left:272px;top:494px;width:12px;height:20px"></div>
<svg style="left:274px;top:499px" width="8" height="10" viewBox="0 0 8 10"><ellipse cx="3.5" cy="3.4" rx="2.3" ry="1.5" fill="#e8eaee" stroke="#111" stroke-width="1.3"/><rect x="2.9" y="4.6" width="1.3" height="4.6" fill="#111"/></svg>
<div class="t gh" style="left:485.5px;top:497.2px;color:#6c7690">kliknij aby dodać filtr</div>
<div class="a" style="left:272px;top:514px;width:531px;height:2px;background:#b2bbca"></div>
<div class="a" style="left:272px;top:516px;width:531px;height:229px;background:#fff"></div>
<div class="a" style="left:284px;top:516px;width:519px;height:20px;background:#ffe7a2"></div>
<div class="ind" style="left:272px;top:516px;width:12px;height:20px"></div>
<div class="t g13" style="left:286px;top:520px">Guzik okrągły Perła</div>
<div class="t g13" style="left:436px;top:520px">Guzik okrągły Perła</div>
<div class="t g13" style="left:586px;top:520px">POZOSTAŁE</div>
<div class="t g13" style="left:736px;top:520px">Guziki</div>
<div class="a" style="left:284px;top:536px;width:519px;height:20px;background:#ecf5ec"></div>
<div class="ind" style="left:272px;top:536px;width:12px;height:20px"></div>
<div class="t g13" style="left:286px;top:540px">Guzik okrągły Kość słon...</div>
<div class="t g13" style="left:436px;top:540px">Guzik okrągły Kość słon...</div>
<div class="t g13" style="left:586px;top:540px">POZOSTAŁE</div>
<div class="t g13" style="left:736px;top:540px">Guziki</div>
<div class="a" style="left:284px;top:556px;width:519px;height:20px;background:#f5f6f8"></div>
<div class="ind" style="left:272px;top:556px;width:12px;height:20px"></div>
<div class="t g13" style="left:286px;top:560px">Guzik okrągły Szklany</div>
<div class="t g13" style="left:436px;top:560px">Guzik okrągły Szklany</div>
<div class="t g13" style="left:586px;top:560px">POZOSTAŁE</div>
<div class="t g13" style="left:736px;top:560px">Guziki</div>
<div class="a" style="left:284px;top:576px;width:519px;height:20px;background:#ecf5ec"></div>
<div class="ind" style="left:272px;top:576px;width:12px;height:20px"></div>
<div class="t g13" style="left:286px;top:580px">Guzik okrągły metalowy</div>
<div class="t g13" style="left:436px;top:580px">Guzik okrągły metalowy</div>
<div class="t g13" style="left:586px;top:580px">POZOSTAŁE</div>
<div class="t g13" style="left:736px;top:580px">Guziki</div>
<div class="a" style="left:284px;top:596px;width:519px;height:20px;background:#f5f6f8"></div>
<div class="ind" style="left:272px;top:596px;width:12px;height:20px"></div>
<div class="t g13" style="left:286px;top:600px">Guzik okrągły Rogowy</div>
<div class="t g13" style="left:436px;top:600px">Guzik okrągły Rogowy</div>
<div class="t g13" style="left:586px;top:600px">POZOSTAŁE</div>
<div class="t g13" style="left:736px;top:600px">Guziki</div>
<div class="a" style="left:284px;top:616px;width:519px;height:20px;background:#ecf5ec"></div>
<div class="ind" style="left:272px;top:616px;width:12px;height:20px"></div>
<div class="t g13" style="left:286px;top:620px">Guzik prostokątny Perło...</div>
<div class="t g13" style="left:436px;top:620px">Guzik prostokątny Perło...</div>
<div class="t g13" style="left:586px;top:620px">POZOSTAŁE</div>
<div class="t g13" style="left:736px;top:620px">Guziki</div>
<div class="a" style="left:284px;top:636px;width:519px;height:20px;background:#f5f6f8"></div>
<div class="ind" style="left:272px;top:636px;width:12px;height:20px"></div>
<div class="t g13" style="left:286px;top:640px">Guzik prostokątny kość ...</div>
<div class="t g13" style="left:436px;top:640px">Guzik prostokątny kość ...</div>
<div class="t g13" style="left:586px;top:640px">POZOSTAŁE</div>
<div class="t g13" style="left:736px;top:640px">Guziki</div>
<div class="a" style="left:284px;top:656px;width:519px;height:20px;background:#ecf5ec"></div>
<div class="ind" style="left:272px;top:656px;width:12px;height:20px"></div>
<div class="t g13" style="left:286px;top:660px">Guzik prostokątny Szkla...</div>
<div class="t g13" style="left:436px;top:660px">Guzik prostokątny Szkla...</div>
<div class="t g13" style="left:586px;top:660px">POZOSTAŁE</div>
<div class="t g13" style="left:736px;top:660px">Guziki</div>
<div class="a" style="left:284px;top:676px;width:519px;height:20px;background:#f5f6f8"></div>
<div class="ind" style="left:272px;top:676px;width:12px;height:20px"></div>
<div class="t g13" style="left:286px;top:680px">Guzik prostokątny meta...</div>
<div class="t g13" style="left:436px;top:680px">Guzik prostokątny meta...</div>
<div class="t g13" style="left:586px;top:680px">POZOSTAŁE</div>
<div class="t g13" style="left:736px;top:680px">Guziki</div>
<div class="a" style="left:284px;top:696px;width:519px;height:20px;background:#ecf5ec"></div>
<div class="ind" style="left:272px;top:696px;width:12px;height:20px"></div>
<div class="t g13" style="left:286px;top:700px">Guzik prostokątny rogowy</div>
<div class="t g13" style="left:436px;top:700px">Guzik prostokątny rogowy</div>
<div class="t g13" style="left:586px;top:700px">POZOSTAŁE</div>
<div class="t g13" style="left:736px;top:700px">Guziki</div>
<div class="a" style="left:284px;top:515px;width:519px;height:21px;border:1px dotted #222"></div>
<svg style="left:276px;top:522px" width="4" height="7" viewBox="0 0 4 7"><path d="M0 0 L4 3.5 L0 7 Z" fill="#111"/></svg>
<div class="a" style="left:272px;top:745px;width:531px;height:16px;background:linear-gradient(#e9ecf0,#eef0f3 60%,#e5e8ec)"></div>
<svg style="left:279px;top:749px" width="4" height="7" viewBox="0 0 4 7"><path d="M4 0 L0 3.5 L4 7 Z" fill="#8a93a3"/></svg>
<svg style="left:792px;top:749px" width="4" height="7" viewBox="0 0 4 7"><path d="M0 0 L4 3.5 L0 7 Z" fill="#8a93a3"/></svg>
<div class="a" style="left:289px;top:746px;width:181px;height:14px;border:1px solid #a9b1bf;border-radius:2px;background:linear-gradient(#f4f6f9,#dfe3ea 50%,#cfd5df)"></div>
<div class="a" style="left:376px;top:749px;width:7px;height:7px;background-image:linear-gradient(90deg,#4a5468 1.5px,transparent 1.5px);background-size:2.7px 7px"></div>
<svg style="left:812px;top:479px" width="16" height="14"><use href="#ilist"/></svg>
<div class="a" style="left:237px;top:302px;width:315px;height:22.5px;border:2.5px solid #f81010;border-radius:6px;box-shadow:1px 2px 5px rgba(0,0,0,.25),inset 0 1px 4px rgba(60,40,0,.18)"></div>
<div class="a" style="left:486px;top:290.2px;width:29px;height:29px;border-radius:50%;background:rgba(196,14,22,0.9);border:2px solid #fa1818;box-shadow:1px 2px 4px rgba(0,0,0,.35)"></div>
<div class="t" style="left:495.5px;top:296.5px;font-size:16px;color:#fff">2</div>
<div class="a" style="left:236px;top:471px;width:40px;height:29px;border:2.5px solid #f81010;border-radius:6px;box-shadow:1px 2px 5px rgba(0,0,0,.25),inset 0 1px 4px rgba(60,40,0,.18)"></div>
<div class="a" style="left:265.5px;top:482px;width:29px;height:29px;border-radius:50%;background:rgba(196,14,22,0.9);border:2px solid #fa1818;box-shadow:1px 2px 4px rgba(0,0,0,.35)"></div>
<div class="t" style="left:274.5px;top:488.5px;font-size:16px;color:#fff">3</div>
<!-- RIGHT PANEL -->
<div class="a" style="left:844px;top:88px;width:224px;height:16px;border:1px solid #98a2b4"></div>
<div class="t sx" style="left:849px;top:91.9px;font-size:10.6px;color:#141c34;transform:scaleX(0.915)">· PODGRUPY PRODUKCYJNE SKŁADNIKÓW ·</div>
<svg style="left:854px;top:110px" width="16" height="16"><use href="#iplus"/></svg>
<div class="t sm" style="left:849.5px;top:130.3px">Dodaj</div>
<svg style="left:892px;top:110px" width="16" height="16"><use href="#iedit"/></svg>
<div class="t sm" style="left:886.5px;top:130.3px">Edytuj</div>
<svg style="left:931px;top:110px" width="16" height="16"><use href="#iclone"/></svg>
<div class="t sm" style="left:925.5px;top:130.3px">Klonuj</div>
<svg style="left:970px;top:112px" width="12" height="12"><use href="#ix"/></svg>
<div class="t sm" style="left:965px;top:130.3px">Usuń</div>
<svg style="left:1070px;top:117px" width="16" height="16"><use href="#iframe"/></svg>
<svg style="left:1105px;top:118px" width="16" height="16"><use href="#iref"/></svg>
<svg style="left:1138px;top:119px" width="16" height="14"><use href="#ilist"/></svg>
<div class="a" style="left:843px;top:145px;width:318px;height:400px;border:1px solid #a2adbf;border-top-color:#b8c1d0"></div>
<div class="hdr" style="left:844px;top:146px;width:316px;height:18px"></div>
<div class="ind" style="left:844px;top:146px;width:11px;height:18px"></div>
<div class="a" style="left:855px;top:148px;width:1px;height:15px;background:#d2d7df"></div>
<svg style="left:845px;top:150.5px" width="10" height="10" viewBox="0 0 10 10"><path d="M4.5 0.9 V3.2 M4.5 5.8 V8.1 M0.9 4.5 H3.2 M5.8 4.5 H8.1 M2 2 L3.4 3.4 M5.6 5.6 L7 7 M7 2 L5.6 3.4 M3.4 5.6 L2 7" stroke="#111" stroke-width="1.25" stroke-linecap="round"/></svg>
<div class="t" style="left:859px;top:150.5px;font-size:11px;color:#46557a">Kod</div>
<div class="t" style="left:958px;top:150.5px;font-size:11px;color:#46557a">Uwagi</div>
<div class="a" style="left:855px;top:164px;width:305px;height:19px;background:#f5f6f8"></div>
<div class="ind" style="left:844px;top:164px;width:11px;height:19px"></div>
<div class="a" style="left:875px;top:164px;width:285px;height:19px;background:#fff5de"></div>
<div style="position:absolute;left:876px;top:164px;width:78px;height:19px;overflow:hidden"><div class="t" style="left:0;top:5.6px;font-size:10.8px;color:#1b2238">Masa perłowa</div></div>
<div class="a" style="left:866px;top:173px;width:8px;height:1px;background-image:linear-gradient(90deg,#aab2be 1px,transparent 1px);background-size:2px 1px"></div>
<div class="a" style="left:855px;top:183px;width:305px;height:19px;background:#ecf5ec"></div>
<div class="ind" style="left:844px;top:183px;width:11px;height:19px"></div>
<div style="position:absolute;left:876px;top:183px;width:78px;height:19px;overflow:hidden"><div class="t" style="left:0;top:5.6px;font-size:10.8px;color:#1b2238">Roślinna kość sł</div></div>
<div class="a" style="left:866px;top:192px;width:8px;height:1px;background-image:linear-gradient(90deg,#aab2be 1px,transparent 1px);background-size:2px 1px"></div>
<div class="a" style="left:855px;top:202px;width:305px;height:19px;background:#f5f6f8"></div>
<div class="ind" style="left:844px;top:202px;width:11px;height:19px"></div>
<div style="position:absolute;left:876px;top:202px;width:78px;height:19px;overflow:hidden"><div class="t" style="left:0;top:5.6px;font-size:10.8px;color:#1b2238">Szkło</div></div>
<div class="a" style="left:866px;top:211px;width:8px;height:1px;background-image:linear-gradient(90deg,#aab2be 1px,transparent 1px);background-size:2px 1px"></div>
<div class="a" style="left:855px;top:221px;width:305px;height:19px;background:#ecf5ec"></div>
<div class="ind" style="left:844px;top:221px;width:11px;height:19px"></div>
<div style="position:absolute;left:876px;top:221px;width:78px;height:19px;overflow:hidden"><div class="t" style="left:0;top:5.6px;font-size:10.8px;color:#1b2238">Metal</div></div>
<div class="a" style="left:866px;top:230px;width:8px;height:1px;background-image:linear-gradient(90deg,#aab2be 1px,transparent 1px);background-size:2px 1px"></div>
<div class="a" style="left:855px;top:240px;width:305px;height:19px;background:#f5f6f8"></div>
<div class="ind" style="left:844px;top:240px;width:11px;height:19px"></div>
<div style="position:absolute;left:876px;top:240px;width:78px;height:19px;overflow:hidden"><div class="t" style="left:0;top:5.6px;font-size:10.8px;color:#1b2238">Róg</div></div>
<div class="a" style="left:866px;top:249px;width:8px;height:1px;background-image:linear-gradient(90deg,#aab2be 1px,transparent 1px);background-size:2px 1px"></div>
<div class="a" style="left:865px;top:173px;width:1px;height:77px;background-image:linear-gradient(#aab2be 1px,transparent 1px);background-size:1px 2px"></div>
<svg style="left:848px;top:171px" width="4" height="7" viewBox="0 0 4 7"><path d="M0 0 L4 3.5 L0 7 Z" fill="#111"/></svg>
<div class="a" style="left:844px;top:527px;width:316px;height:17px;background:linear-gradient(#e9ecf0,#eef0f3 60%,#e5e8ec);border-top:1px solid #d8dde5"></div>
<svg style="left:851px;top:532px" width="4" height="7" viewBox="0 0 4 7"><path d="M4 0 L0 3.5 L4 7 Z" fill="#8a93a3"/></svg>
<svg style="left:1150px;top:532px" width="4" height="7" viewBox="0 0 4 7"><path d="M0 0 L4 3.5 L0 7 Z" fill="#8a93a3"/></svg>
<div class="a" style="left:861px;top:529px;width:214px;height:14px;border:1px solid #a9b1bf;border-radius:2px;background:linear-gradient(#f4f6f9,#dfe3ea 50%,#cfd5df)"></div>
<div class="a" style="left:964px;top:532px;width:7px;height:7px;background-image:linear-gradient(90deg,#4a5468 1.5px,transparent 1.5px);background-size:2.7px 7px"></div>
<div class="t" style="left:916px;top:547.7px;font-size:11px;letter-spacing:2.1px;color:#2a3450">UKRYJ SZCZEGÓŁY [F8]</div>
<div class="a" style="left:995px;top:564px;width:15px;height:2px;background-image:linear-gradient(90deg,#7886a4 2px,transparent 2px);background-size:3.7px 2px"></div>
<div class="a" style="left:846px;top:568px;width:82px;height:28px;border:1px solid #a3b0c5;border-bottom:none;border-radius:3px 3px 0 0;background:linear-gradient(#fffdf8,#fff6df 50%,#fde8ab 65%,#fde39c)"></div>
<svg style="left:856px;top:575px" width="16" height="16"><use href="#iskl"/></svg>
<div class="t" style="left:877.5px;top:580px;font-size:10.3px;color:#141c34">Składniki</div>
<div class="a" style="left:843px;top:595px;width:318px;height:171px;background:#bcc7d7;border-left:1px solid #98a4b8;border-right:1px solid #98a4b8"></div>
<div class="a" style="left:843px;top:595px;width:318px;height:4px;background:#fde39f;border-radius:3px 3px 0 0"></div>
<div class="a" style="left:843px;top:762px;width:318px;height:4px;background:#fde39f;border-radius:0 0 3px 3px"></div>
<svg style="left:853px;top:606px" width="16" height="16"><use href="#iplus"/></svg>
<svg style="left:853px;top:634px" width="16" height="16"><use href="#iedit"/></svg>
<svg style="left:853px;top:662px" width="16" height="16"><use href="#iclone"/></svg>
<svg style="left:855px;top:692px" width="12" height="12"><use href="#ix"/></svg>
<div class="a" style="left:845px;top:712px;width:31px;height:1px;background:#98a2b2"></div>
<div class="a" style="left:845px;top:713px;width:31px;height:1px;background:#fff"></div>
<svg style="left:853px;top:720px" width="15" height="15" viewBox="0 0 15 15"><path d="M5 0.5 H10 V5 H14.5 V10 H10 V14.5 H5 V10 H0.5 V5 H5 Z" fill="#3cc21e" stroke="#1a8a10" stroke-width="1" stroke-linejoin="round"/><path d="M6.3 2 V6.3 H2" stroke="#b8f0a0" stroke-width="0.8" fill="none"/></svg>
<div style="position:absolute;left:852px;top:747px;width:17px;height:14px;overflow:hidden"><svg style="left:1px;top:1px" width="15" height="15" viewBox="0 0 15 15"><path d="M2 2 L13 13 M13 2 L2 13" stroke="#c81818" stroke-width="3.6" stroke-linecap="round"/><path d="M2 2 L13 13 M13 2 L2 13" stroke="#f04848" stroke-width="1.4" stroke-linecap="round"/></svg></div>
<div class="hdr" style="left:877px;top:599px;width:250px;height:22px"></div>
<div class="ind" style="left:877px;top:599px;width:12px;height:22px"></div>
<div class="a" style="left:889px;top:601px;width:1px;height:19px;background:#f6f7f9;border-left:1px solid #d2d7df"></div>
<div class="a" style="left:988px;top:601px;width:1px;height:19px;background:#f6f7f9;border-left:1px solid #d2d7df"></div>
<svg style="left:879px;top:604.5px" width="10" height="10" viewBox="0 0 10 10"><path d="M4.5 0.9 V3.2 M4.5 5.8 V8.1 M0.9 4.5 H3.2 M5.8 4.5 H8.1 M2 2 L3.4 3.4 M5.6 5.6 L7 7 M7 2 L5.6 3.4 M3.4 5.6 L2 7" stroke="#111" stroke-width="1.25" stroke-linecap="round"/></svg>
<div class="t gh" style="left:891.4px;top:605px">Kod</div>
<div class="t gh" style="left:991px;top:605px">Nazwa</div>
<div class="a" style="left:889px;top:621px;width:238px;height:21px;background:#ecf5ec"></div>
<div class="ind" style="left:877px;top:621px;width:12px;height:21px"></div>
<svg style="left:879px;top:627px" width="8" height="10" viewBox="0 0 8 10"><ellipse cx="3.5" cy="3.4" rx="2.3" ry="1.5" fill="#e8eaee" stroke="#111" stroke-width="1.3"/><rect x="2.9" y="4.6" width="1.3" height="4.6" fill="#111"/></svg>
<div class="t gh" style="left:949.5px;top:625.8px;color:#6c7690">kliknij aby dodać filtr</div>
<div class="a" style="left:877px;top:642px;width:250px;height:2px;background:#b2bbca"></div>
<div class="a" style="left:877px;top:644px;width:250px;height:101px;background:#fff"></div>
<div class="a" style="left:889px;top:644px;width:238px;height:20px;background:#f5f6f8"></div>
<div class="ind" style="left:877px;top:644px;width:12px;height:20px"></div>
<div class="t g13" style="left:891px;top:648px">Guzik okrągły ...</div>
<div style="position:absolute;left:991px;top:644px;width:136px;height:20px;overflow:hidden"><div class="t g13" style="left:0;top:4px">Guzik okrągły Perła</div></div>
<div class="a" style="left:889px;top:664px;width:238px;height:20px;background:#ecf5ec"></div>
<div class="ind" style="left:877px;top:664px;width:12px;height:20px"></div>
<div class="t g13" style="left:891px;top:668px">Guzik prostoką...</div>
<div style="position:absolute;left:991px;top:664px;width:136px;height:20px;overflow:hidden"><div class="t g13" style="left:0;top:4px">Guzik prostokątny Perłowy</div></div>
<svg style="left:882px;top:651px" width="4" height="7" viewBox="0 0 4 7"><path d="M0 0 L4 3.5 L0 7 Z" fill="#111"/></svg>
<div class="a" style="left:877px;top:745px;width:250px;height:16px;background:linear-gradient(#e9ecf0,#eef0f3 60%,#e5e8ec)"></div>
<svg style="left:884px;top:749px" width="4" height="7" viewBox="0 0 4 7"><path d="M4 0 L0 3.5 L4 7 Z" fill="#8a93a3"/></svg>
<svg style="left:1116px;top:749px" width="4" height="7" viewBox="0 0 4 7"><path d="M0 0 L4 3.5 L0 7 Z" fill="#8a93a3"/></svg>
<div class="a" style="left:895px;top:746px;width:170px;height:14px;border:1px solid #a9b1bf;border-radius:2px;background:linear-gradient(#f4f6f9,#dfe3ea 50%,#cfd5df)"></div>
<div class="a" style="left:976px;top:749px;width:7px;height:7px;background-image:linear-gradient(90deg,#4a5468 1.5px,transparent 1.5px);background-size:2.7px 7px"></div>
<svg style="left:1135px;top:607px" width="16" height="14"><use href="#ilist"/></svg>
<div class="a" style="left:1157px;top:766px;width:0;height:0"></div>
<div class="a" style="left:531px;top:769px;width:15px;height:2px;background-image:linear-gradient(90deg,#7886a4 2px,transparent 2px);background-size:3.7px 2px"></div>
<div class="a" style="left:996px;top:769px;width:15px;height:2px;background-image:linear-gradient(90deg,#7886a4 2px,transparent 2px);background-size:3.7px 2px"></div>
</body></html>
